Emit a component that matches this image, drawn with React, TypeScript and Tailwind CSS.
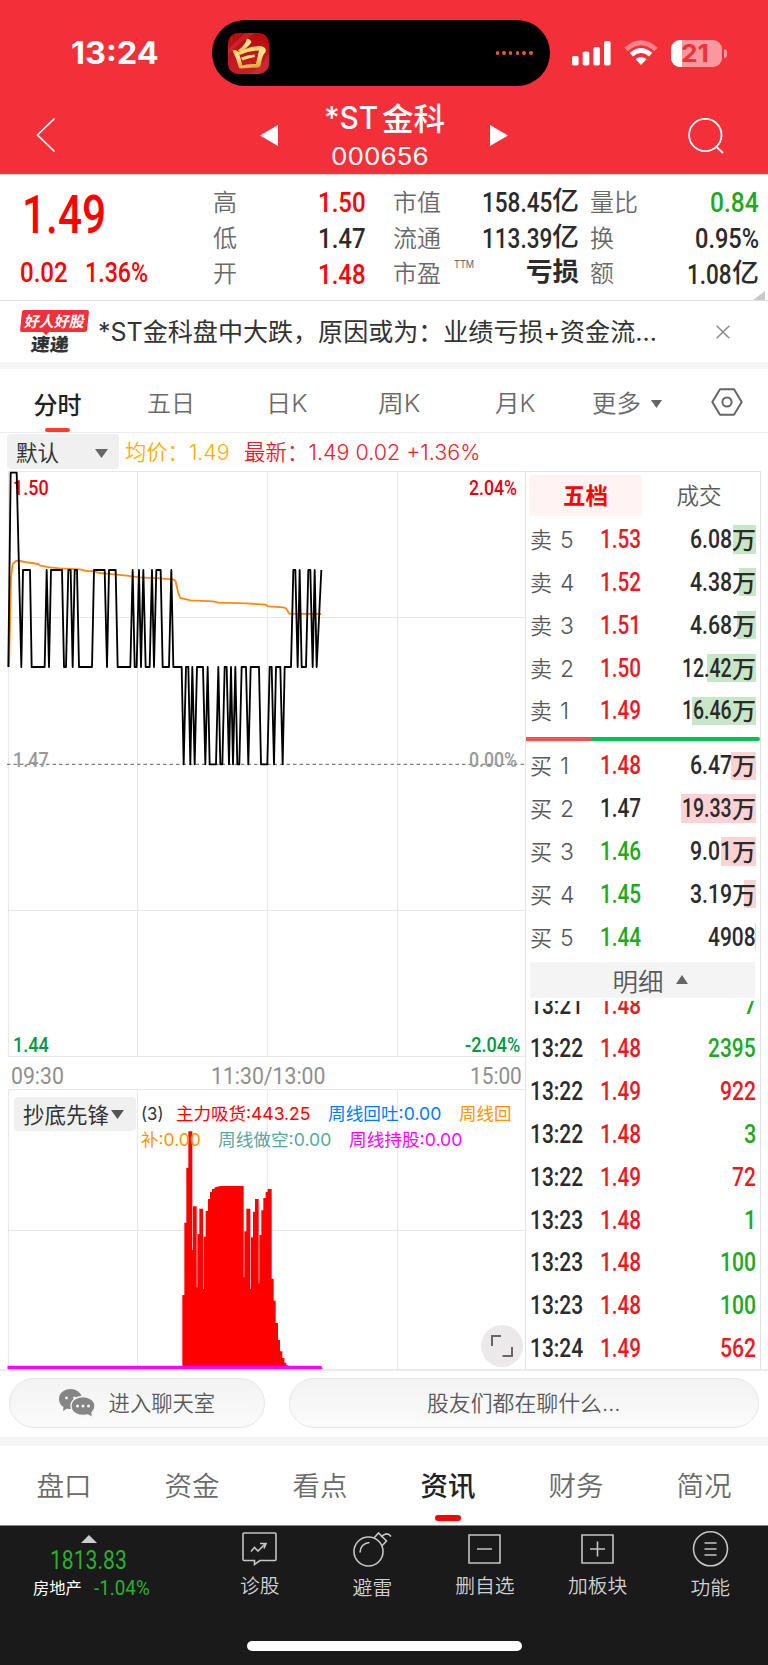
import React, { useLayoutEffect, useRef } from "react";

const din = "font-[Roboto,'Noto_Sans_CJK_SC',sans-serif]";

/* Condenses or widens a line of text so that it fills the width given by its class. */
function Fit({ className = "", children }: { className?: string; children: React.ReactNode }) {
  const outer = useRef<HTMLSpanElement>(null);
  const inner = useRef<HTMLSpanElement>(null);
  useLayoutEffect(() => {
    const o = outer.current;
    const i = inner.current;
    if (o && i) i.style.transform = `scaleX(${o.clientWidth / i.offsetWidth})`;
  }, []);
  return (
    <span ref={outer} className={`block shrink-0 whitespace-nowrap ${className}`}>
      <span ref={inner} className="inline-block origin-left align-top">
        {children}
      </span>
    </span>
  );
}

function StatusBar() {
  return (
    <div className="flex h-[66px] items-center text-white">
      <Fit className="ml-[71px] w-[88px] font-[Inter,sans-serif] text-[31px] leading-[66px] font-bold">13:24</Fit>
      <div className="ml-[52.500px] flex h-[66px] w-[338px] items-center justify-between rounded-full bg-black pr-[17px] pl-4">
        <div className="flex size-[41px] items-center justify-center overflow-hidden rounded-[10px] bg-linear-to-b from-[#b80909] to-[#c81e2c]">
          <svg viewBox="0 0 41 41" className="size-[41px]">
            <defs>
              <linearGradient id="gold" x1="0" y1="0" x2="0.4" y2="1">
                <stop offset="0" stopColor="#ffd24a" />
                <stop offset="0.6" stopColor="#fbe59a" />
                <stop offset="1" stopColor="#dcae35" />
              </linearGradient>
            </defs>
            <path d="M0 16Q10 6 18 0H28Q14 7 0 22ZM22 41Q34 34 41 20V34Q36 39 30 41Z" fill="#d33a42" opacity=".45" />
            <g fill="url(#gold)">
              <path d="M19 5.500Q22.500 6 23.500 9Q20 15 12 19L10 17.500Q17 12.500 19 5.500Z" />
              <path d="M4.500 17.500Q8 16 10.500 19Q13 26 14.500 33Q13.500 36 11 35Q9 26 4.500 17.500Z" />
              <path d="M9.500 19.500Q21 13.500 32 13Q39 14 37.500 19Q34.500 22 33.500 28Q33 34 30 34.500L12.500 35.500V33Q20 30.500 28 31Q29.500 24 31 17.500Q21 17.500 11.500 22Z" />
              <path d="M13 24.500Q19 22 26.500 21.500L27 24Q20 25 14.500 27.500Z" />
            </g>
          </svg>
        </div>
        <div className="flex gap-[3.200px]">
          {[0, 1, 2, 3, 4, 5].map((n) => (
            <i key={n} className="size-[3.500px] rounded-full bg-[#f4592f]" />
          ))}
        </div>
      </div>
      <svg viewBox="0 0 39 25" className="ml-[22.500px] h-[25px] w-[39px] fill-white">
        <rect x="0" y="15" width="6.600" height="9.500" rx="1.800" />
        <rect x="10.700" y="10.500" width="6.600" height="14" rx="1.800" />
        <rect x="21.300" y="6" width="6.600" height="18.500" rx="1.800" />
        <rect x="32" y="0" width="6.600" height="24.500" rx="1.800" />
      </svg>
      <svg viewBox="0 0 34 26" className="ml-[13px] h-[26px] w-[34px]" fill="none">
        <path d="M2 9.500Q17 -4 32 9.500" stroke="#f88388" strokeWidth="4.800" />
        <path d="M7.300 14.700Q17 6.500 26.700 14.700" stroke="#fff" strokeWidth="4.800" />
        <path d="M11.500 19.200Q17 15 22.500 19.200L17 25Z" fill="#fff" />
      </svg>
      <div className="ml-[13px] flex h-[27px] w-[51px] items-center overflow-hidden rounded-[9px] bg-[#f9999d]">
        <div className="h-full w-[11px] bg-white" />
        <Fit className="-ml-px w-[28px] font-[Inter,sans-serif] text-[24.500px] leading-[27px] font-bold text-[#f33039]">21</Fit>
      </div>
      <div className="ml-[1.500px] h-[9px] w-[3px] rounded-r-full bg-[#f9999d]" />
    </div>
  );
}

function Header() {
  return (
    <header className="h-[174px] bg-[#f33039] pt-5 text-white">
      <StatusBar />
      <div className="flex h-[88px] pl-[36px]">
        <svg viewBox="0 0 20 36" className="mt-[31px] h-[36px] w-[20px]" fill="none" stroke="#fff" strokeWidth="1.700">
          <path d="M18.500 1.500L1.500 18L18.500 34.500" />
        </svg>
        <svg viewBox="0 0 18 21" className="mt-[39px] ml-[204px] h-[21px] w-[18px] fill-white">
          <path d="M0 10.500L18 0V21Z" />
        </svg>
        <div className="mx-[46px] flex w-[120px] flex-col items-center">
          <div className="flex h-[66px]">
            <Fit className="w-[54px] font-[Inter,sans-serif] text-[31px] leading-[64px] font-medium">*ST</Fit>
            <Fit className="ml-1 w-[63px] font-['Noto_Sans_CJK_SC',sans-serif] text-[31px] leading-[61px] font-medium">金科</Fit>
          </div>
          <Fit className="-mt-[9px] mr-[8px] w-[98px] font-[Inter,sans-serif] text-[24.500px] leading-[26px]">000656</Fit>
        </div>
        <svg viewBox="0 0 18 21" className="mt-[39px] h-[21px] w-[18px] fill-white">
          <path d="M18 10.500L0 0V21Z" />
        </svg>
        <svg viewBox="0 0 37 38" className="mt-[31px] ml-[180px] h-[38px] w-[37px]" fill="none" stroke="#fff" strokeWidth="1.800">
          <circle cx="17.300" cy="18" r="16.200" />
          <path d="M28.500 30L35 36" />
        </svg>
      </div>
    </header>
  );
}

function Quote() {
  const lab = "font-['Noto_Sans_CJK_SC',sans-serif] text-[24px] leading-[35.700px] font-[350] text-[#6a6a6a]";
  const val = `${din} text-[28px] leading-9 font-medium text-[#2b2b2b]`;
  return (
    <section className="flex h-[127px] border-t border-b border-t-[#fbd0d2] border-b-[#dedede] pl-5">
      <div className="w-[193px] text-[#f00]">
        <Fit className={`${din} ml-[2px] mt-[10px] w-[84px] text-[53px] leading-[60px] font-medium`}>1.49</Fit>
        <div className="mt-[10px] flex">
          <Fit className={`${din} w-[48px] text-[28px] leading-9 font-medium`}>0.02</Fit>
          <Fit className={`${din} ml-[17px] w-[63px] text-[28px] leading-9 font-medium`}>1.36%</Fit>
        </div>
      </div>
      <div className={`mt-[8px] w-[105px] ${lab}`}>
        <div>高</div>
        <div>低</div>
        <div>开</div>
      </div>
      <div className={`mt-[10px] w-[75px] ${val}`}>
        <Fit className="w-[48px] text-[#f00]">1.50</Fit>
        <Fit className="w-[48px]">1.47</Fit>
        <Fit className="w-[48px] text-[#f00]">1.48</Fit>
      </div>
      <div className={`mt-[8px] w-[61px] ${lab}`}>
        <div>市值</div>
        <div>流通</div>
        <div>市盈</div>
      </div>
      <Fit className="mt-[81px] w-[20px] font-[Inter,sans-serif] text-[11px] leading-4 text-[#666]">TTM</Fit>
      <div className={`mt-[10px] flex w-[105px] flex-col items-end ${val}`}>
        <div className="flex">
          <Fit className="w-[70px]">158.45</Fit>
          <Fit className="-mt-[2px] w-[27px] text-[26px]">亿</Fit>
        </div>
        <div className="flex">
          <Fit className="w-[70px]">113.39</Fit>
          <Fit className="-mt-[2px] w-[27px] text-[26px]">亿</Fit>
        </div>
        <Fit className="-mt-[3px] w-[53px] text-[26px] font-bold">亏损</Fit>
      </div>
      <div className={`mt-[8px] ml-[11px] w-[49px] ${lab}`}>
        <div>量比</div>
        <div>换</div>
        <div>额</div>
      </div>
      <div className={`mt-[10px] flex w-[120px] flex-col items-end ${val}`}>
        <Fit className="w-[49px] text-[#21a821]">0.84</Fit>
        <Fit className="w-[64px]">0.95%</Fit>
        <div className="flex">
          <Fit className="w-[45px]">1.08</Fit>
          <Fit className="-mt-[2px] w-[27px] text-[26px]">亿</Fit>
        </div>
      </div>
      <svg viewBox="0 0 12 9" className="-ml-[6px] h-[9px] w-[12px] self-end fill-[#c8c8c8]">
        <path d="M12 0V9H0Z" />
      </svg>
    </section>
  );
}

function News() {
  return (
    <section className="flex h-[61px] items-center bg-white">
      <div className="ml-[19px] flex w-[71px] flex-col items-start">
        <div className="ml-[2px] flex h-[22px] w-[67px] -skew-x-6 items-center justify-center rounded-[2px] bg-[#f33039]">
          <Fit className="w-[60px] -skew-x-6 font-['Noto_Sans_CJK_SC',sans-serif] text-[15px] leading-5 font-bold text-white">好人好股</Fit>
        </div>
        <i className="-mt-1 ml-[24px] size-[6px] rotate-45 bg-[#f33039]" />
        <Fit className="ml-[12px] w-[38px] -skew-x-6 font-['Noto_Sans_CJK_SC',sans-serif] text-[18px] leading-[19px] font-black text-[#333]">速递</Fit>
      </div>
      <Fit className="ml-[8px] w-[559px] font-[Inter,'Noto_Sans_CJK_SC',sans-serif] text-[25px] leading-[36px] text-[#333]">
        *ST金科盘中大跌，原因或为：业绩亏损+资金流…
      </Fit>
      <svg viewBox="0 0 14 14" className="ml-[59px] size-[14px]" stroke="#8a8a8a" strokeWidth="1.500">
        <path d="M.7.7L13.300 13.300M13.300.7L.7 13.300" />
      </svg>
    </section>
  );
}

function PeriodTabs() {
  const t = "font-[Inter,'Noto_Sans_CJK_SC',sans-serif] text-[24px] leading-[69px] font-[350] text-[#6a6a6a]";
  return (
    <nav className="flex h-[71px] items-stretch border-t-[7px] border-b border-t-[#f5f5f5] border-b-[#ececec]">
      <div className="ml-[33px] flex w-[49px] flex-col items-center">
        <span className="h-[59px] font-['Noto_Sans_CJK_SC',sans-serif] text-[24px] leading-[69px] font-medium whitespace-nowrap text-[#222]">分时</span>
        <i className="h-[5px] w-[25px] rounded-[2px] bg-[#ff3b30]" />
      </div>
      <Fit className={`ml-[65px] w-[48px] ${t}`}>五日</Fit>
      <Fit className={`ml-[71px] w-[42px] ${t}`}>日K</Fit>
      <Fit className={`ml-[70px] w-[43px] ${t}`}>周K</Fit>
      <Fit className={`ml-[74px] w-[41px] ${t}`}>月K</Fit>
      <Fit className={`ml-[56px] w-[49px] ${t}`}>更多</Fit>
      <svg viewBox="0 0 11 8" className="mt-[31px] ml-[9.500px] h-[8px] w-[11px] fill-[#666]">
        <path d="M0 0H11L5.500 8Z" />
      </svg>
      <svg viewBox="0 0 32 28" className="mt-[19px] ml-[49px] h-[28px] w-[32px]" fill="none" stroke="#666" strokeWidth="2">
        <path d="M9 1.200H23L30.700 14L23 26.800H9L1.300 14Z" strokeLinejoin="round" />
        <circle cx="16" cy="14" r="4.600" />
      </svg>
    </nav>
  );
}

function AverageRow() {
  const t = "font-[Inter,'Noto_Sans_CJK_SC',sans-serif] text-[21.500px] leading-[36px] font-[350]";
  return (
    <div className="flex h-[38px] pt-px">
      <div className="ml-[7px] flex h-[35px] w-[112px] items-center justify-between rounded-[4px] bg-[#f0f0f0] pr-[11px] pl-[9px]">
        <span className="font-['Noto_Sans_CJK_SC',sans-serif] text-[21.500px] leading-[34px] text-[#333]">默认</span>
        <svg viewBox="0 0 13 9" className="mt-1 h-[9px] w-[13px] fill-[#666]">
          <path d="M0 0H13L6.500 9Z" />
        </svg>
      </div>
      <Fit className={`ml-[6px] w-[105px] text-[#ffae00] ${t}`}>均价：1.49</Fit>
      <Fit className={`ml-[14px] w-[236px] text-[#e8222c] ${t}`}>最新：1.49 0.02 +1.36%</Fit>
    </div>
  );
}

const PRICE =
  "25,606 32,23 50,23 57,315 64,606 69,315 90,315 95,606 134,606 140,315 147,606 153,315 186,315 192,606 198,606 205,315 212,315 218,606 224,315 231,315 237,606 276,606 282,315 314,315 321,606 327,315 347,315 353,606 391,606 398,315 404,606 410,606 417,315 423,606 430,315 437,606 449,606 456,315 462,606 469,315 482,315 488,606 507,606 514,315 520,606 545,606 551,898 558,606 565,606 571,898 577,606 584,898 591,606 609,606 616,898 623,606 629,898 648,898 655,606 661,898 667,898 674,606 680,606 687,898 693,606 699,898 706,606 712,898 718,898 725,606 738,606 745,898 752,606 777,606 783,898 802,898 809,606 815,606 822,898 828,606 841,606 848,898 854,606 873,606 880,315 886,315 893,606 899,315 905,606 918,606 925,315 931,315 938,606 944,315 950,606 964,315";
const AVERAGE =
  "27,606 33,340 38,297 48,288 60,288 75,291 115,297 122,302 150,307 180,310 240,313 260,318 285,319 297,324 320,326 380,332 420,337 480,340 522,344 527,350 535,385 541,399 560,403 572,406 640,409 655,413 740,415 795,419 805,424 850,427 858,430 868,446 964,447";

function PriceChart() {
  const l = `absolute ${din} text-[21px] leading-[22px] font-medium`;
  return (
    <div className="relative h-[586px]">
      <svg viewBox="0 471 526 586" className="h-[586px] w-[526px]" fill="none">
        <path
          d="M8.500 471V1057M137.500 471V1057M267.500 471V1057M397.500 471V1057M8 471.500H526M8 617.500H526M8 910.500H526M8 1056.500H526"
          stroke="#e8e8e8"
          strokeWidth="1.200"
        />
        <path d="M7 764.400H526" stroke="#808080" strokeWidth="1.300" strokeDasharray="3.500 3" />
      </svg>
      <Fit className={`${l} top-[6px] left-[13px] w-[36px] text-[#e60012]`}>1.50</Fit>
      <Fit className={`${l} top-[6px] left-[469px] w-[48px] text-[#e60012]`}>2.04%</Fit>
      <Fit className={`${l} top-[278px] left-[13px] w-[36px] text-[#999]`}>1.47</Fit>
      <Fit className={`${l} top-[278px] left-[469px] w-[48px] text-[#999]`}>0.00%</Fit>
      <Fit className={`${l} top-[563px] left-[13px] w-[36px] text-[#009944]`}>1.44</Fit>
      <Fit className={`${l} top-[563px] left-[465px] w-[55px] text-[#009944]`}>-2.04%</Fit>
      <svg viewBox="0 471 526 586" className="absolute inset-0 h-[586px] w-[526px]" fill="none">
        <g transform="translate(0 465) scale(.33333)" strokeLinejoin="round">
          <polyline points={AVERAGE} stroke="#ff8a0c" strokeWidth="5.500" />
          <polyline points={PRICE} stroke="#000" strokeWidth="5.500" />
        </g>
      </svg>
    </div>
  );
}

const VOLUME =
  "M37 742V525H43V308H49V143H55V34H67V390H69V259H80V502H82V342H88V266H99V507H101V350H107V273H114V237H120V216H126V207H133V203L141 200L152 198H221V472H223V334H229V266H241V507H243V352H249V275H255V237H266V490H268V345H274V271H280V234H287V216H293V207H305V476H311V542H317V609H324V660H330V694H337V714H343V728H349V736H355V742Z";

function Indicator() {
  const t = "font-[Inter,'Noto_Sans_CJK_SC',sans-serif] text-[17.500px] leading-[26px]";
  return (
    <div className="relative h-[280px]">
      <svg viewBox="0 1089 526 280" className="absolute inset-0 h-[280px] w-[526px]" fill="none">
        <path d="M8.500 1089V1370M137.500 1089V1370M267.500 1089V1370M397.500 1089V1370M8 1089.500H526M8 1230.500H526" stroke="#e8e8e8" strokeWidth="1.200" />
        <g transform="translate(170 1120) scale(.33333)">
          <path d={VOLUME} fill="#f00" />
        </g>
        <path d="M7.500 1365.700H320Q322.500 1366 322.500 1369.300H7.500Z" fill="#f0f" />
      </svg>
      <div className="relative flex pt-2 pl-[14px]">
        <div className="flex h-[34px] w-[122px] items-center rounded-[4px] bg-[#f0f0f0] pl-[9px]">
          <Fit className="w-[86px] font-['Noto_Sans_CJK_SC',sans-serif] text-[21.500px] leading-[32px] text-[#333]">抄底先锋</Fit>
          <svg viewBox="0 0 13 9" className="ml-[2px] h-[9px] w-[13px] fill-[#555]">
            <path d="M0 0H13L6.500 9Z" />
          </svg>
        </div>
        <div className={`ml-[5px] pt-1 ${t}`}>
          <div className="flex h-[26px]">
            <Fit className="w-[23px] text-[#333]">(3)</Fit>
            <Fit className="ml-[12px] w-[134px] text-[#f00]">主力吸货:443.25</Fit>
            <Fit className="ml-[18px] w-[113px] text-[#007aff]">周线回吐:0.00</Fit>
            <Fit className="ml-[18px] w-[53px] text-[#ff9500]">周线回</Fit>
          </div>
          <div className="flex h-[25px]">
            <Fit className="w-[60px] text-[#ff9500]">补:0.00</Fit>
            <Fit className="ml-[17px] w-[113px] text-[#58a6a0]">周线做空:0.00</Fit>
            <Fit className="ml-[18px] w-[113px] text-[#f0f]">周线持股:0.00</Fit>
          </div>
        </div>
      </div>
      <div className="absolute top-[236px] left-[481px] flex size-[42px] items-center justify-center rounded-full bg-[#ebe9ea]">
        <svg viewBox="0 0 22 22" className="size-[22px]" fill="none" stroke="#666" strokeWidth="2">
          <path d="M1 11V1H10M21 12V21H11.500" />
        </svg>
      </div>
    </div>
  );
}

const ASKS = [
  { n: "5", p: "1.53", q: "6.08", bar: "w-[23.500px]", w: "w-[42px]" },
  { n: "4", p: "1.52", q: "4.38", bar: "w-[17.500px]", w: "w-[42px]" },
  { n: "3", p: "1.51", q: "4.68", bar: "w-[18.700px]", w: "w-[42px]" },
  { n: "2", p: "1.50", q: "12.42", bar: "w-[49px]", w: "w-[50px]" },
  { n: "1", p: "1.49", q: "16.46", bar: "w-[64.500px]", w: "w-[50px]" },
];
const BIDS = [
  { n: "1", p: "1.48", q: "6.47", bar: "w-[25.500px]", w: "w-[42px]", c: "text-[#ea1a22]" },
  { n: "2", p: "1.47", q: "19.33", bar: "w-[75.500px]", w: "w-[50px]", c: "text-[#2b2b2b]" },
  { n: "3", p: "1.46", q: "9.01", bar: "w-[35.500px]", w: "w-[42px]", c: "text-[#21a821]" },
  { n: "4", p: "1.45", q: "3.19", bar: "w-[12.500px]", w: "w-[42px]", c: "text-[#21a821]" },
  { n: "5", p: "1.44", q: "4908", bar: "w-[1.500px]", w: "w-[48px]", c: "text-[#21a821]" },
];
const TRADES = [
  { t: "13:21", p: "1.48", q: "7", up: false, w: "w-[12px]" },
  { t: "13:22", p: "1.48", q: "2395", up: false, w: "w-[48px]" },
  { t: "13:22", p: "1.49", q: "922", up: true, w: "w-[36px]" },
  { t: "13:22", p: "1.48", q: "3", up: false, w: "w-[12px]" },
  { t: "13:22", p: "1.49", q: "72", up: true, w: "w-[24px]" },
  { t: "13:23", p: "1.48", q: "1", up: false, w: "w-[12px]" },
  { t: "13:23", p: "1.48", q: "100", up: false, w: "w-[36px]" },
  { t: "13:23", p: "1.48", q: "100", up: false, w: "w-[36px]" },
  { t: "13:24", p: "1.49", q: "562", up: true, w: "w-[36px]" },
];
const NUM = `${din} text-[25.300px] leading-[42.860px] font-medium`;

function Level(props: { side: string; n: string; p: string; q: string; w: string; bar: string; priceColor: string; barColor: string }) {
  return (
    <div className="relative flex h-[42.860px] items-center">
      <i className={`absolute top-[6.300px] right-[4px] h-[28.300px] ${props.bar} ${props.barColor}`} />
      <div className="relative flex w-full pl-[4px]">
        <span className="w-[30px] font-['Noto_Sans_CJK_SC',sans-serif] text-[22px] leading-[38.500px] font-[350] text-[#5a5a5a]">{props.side}</span>
        <span className="w-[40px] font-[Inter,sans-serif] text-[23px] leading-[42.860px] font-light text-[#555]">{props.n}</span>
        <Fit className={`w-[41px] ${NUM} ${props.priceColor}`}>{props.p}</Fit>
        <div className="mr-[4px] ml-auto flex text-[#2b2b2b]">
          <Fit className={`${NUM} ${props.w}`}>{props.q}</Fit>
          {props.q.includes(".") && (
            <Fit className="w-[24px] font-['Noto_Sans_CJK_SC',sans-serif] text-[24px] leading-[39px] font-medium">万</Fit>
          )}
        </div>
      </div>
    </div>
  );
}

function OrderBook() {
  return (
    <aside className="flex h-[898px] w-[236px] flex-col border-x border-t border-[#e2e2e2]">
      <div className="flex h-[47px] shrink-0 pt-[3px] pl-[3px] font-['Noto_Sans_CJK_SC',sans-serif] text-[22.500px] leading-[38px]">
        <div className="h-[41px] w-[113px] rounded-[3px] bg-[#fff3f3] text-center font-bold text-[#f00]">五档</div>
        <div className="w-[114px] text-center font-[350] text-[#5a5a5a]">成交</div>
      </div>
      {ASKS.map((r) => (
        <Level key={r.n} side="卖" {...r} priceColor="text-[#ea1a22]" barColor="bg-[#c8e6c8]" />
      ))}
      <div className="mt-[4px] flex h-1 shrink-0 overflow-hidden rounded-r-full">
        <i className="w-[65px] bg-[#f4504e]" />
        <i className="flex-1 bg-[#0cc04f]" />
      </div>
      <div className="h-[4px] shrink-0" />
      {BIDS.map(({ c, ...r }) => (
        <Level key={r.n} side="买" {...r} priceColor={c} barColor="bg-[#fbd3d5]" />
      ))}
      <div className="mt-[2px] ml-[4px] flex h-[36px] w-[225px] shrink-0 items-center justify-center gap-3 bg-[#f4f4f4] pl-[15px]">
        <span className="font-['Noto_Sans_CJK_SC',sans-serif] text-[25.500px] leading-[33px] font-[350] text-[#5a5a5a]">明细</span>
        <svg viewBox="0 0 12 9" className="h-[9px] w-[12px] fill-[#666]">
          <path d="M6 0L12 9H0Z" />
        </svg>
      </div>
      <div className="mt-[3px] -mb-[2px] flex min-h-0 flex-1 flex-col justify-end overflow-hidden">
        {TRADES.map((r, i) => (
          <div key={i} className="flex h-[42.860px] shrink-0 items-center pl-[4px]">
            <Fit className={`w-[53px] ${NUM} text-[#2b2b2b]`}>{r.t}</Fit>
            <Fit className={`ml-[17px] w-[41px] ${NUM} text-[#ea1a22]`}>{r.p}</Fit>
            <Fit className={`mr-[4px] ml-auto ${r.w} ${NUM} ${r.up ? "text-[#ea1a22]" : "text-[#21a821]"}`}>{r.q}</Fit>
          </div>
        ))}
      </div>
    </aside>
  );
}

function ChatRow() {
  const b = "flex h-[50px] items-center justify-center rounded-full border border-[#e6e6e6] bg-linear-to-b from-[#f3f3f3] to-[#fbfbfb] font-[Inter,'Noto_Sans_CJK_SC',sans-serif] text-[21.300px] leading-[44px] font-[350] text-[#5a5a5a]";
  return (
    <section className="flex h-[68px] gap-[24px] border-t-2 border-[#ebebeb] px-[9px] pt-[7px]">
      <div className={`${b} w-[256px]`}>
        <svg viewBox="0 0 36 29" className="mr-[14px] h-[29px] w-[36px]">
          <path d="M11.500 0C18 0 23 4.400 23 10S18 20 11.500 20Q9.500 20 8 19.500L4 22L4.500 18Q0 15 0 10C0 4.400 5 0 11.500 0Z" fill="#858585" />
          <circle cx="7.500" cy="9" r="1.400" fill="#f5f5f5" />
          <circle cx="15.500" cy="9" r="1.400" fill="#f5f5f5" />
          <path d="M24 7.500C30.500 7.500 36 11.500 36 17Q36 21 33 23.500L33.500 28.500L29 26Q27 26.500 24 26.500C17 26.500 12 22.500 12 17S17 7.500 24 7.500Z" fill="#858585" stroke="#f6f6f6" strokeWidth="1.400" />
          <circle cx="18.500" cy="17" r="1.500" fill="#f5f5f5" />
          <circle cx="24" cy="17" r="1.500" fill="#f5f5f5" />
          <circle cx="29.500" cy="17" r="1.500" fill="#f5f5f5" />
        </svg>
        进入聊天室
      </div>
      <div className={`${b} w-[471px]`}>
        <Fit className="w-[193px]">股友们都在聊什么…</Fit>
      </div>
    </section>
  );
}

function SectionTabs() {
  return (
    <nav className="flex h-[88px] border-t-[9px] border-[#f5f5f5] font-['Noto_Sans_CJK_SC',sans-serif] text-[27.500px] leading-[76px]">
      {["盘口", "资金", "看点", "资讯", "财务", "简况"].map((t) => (
        <div
          key={t}
          className={`flex w-32 flex-col items-center ${t === "资讯" ? "font-medium text-[#222]" : "font-[350] text-[#6a6a6a]"}`}
        >
          <span className="h-[69px]">{t}</span>
          {t === "资讯" && <i className="h-[6px] w-[26px] rounded-[3px] bg-[#f00]" />}
        </div>
      ))}
    </nav>
  );
}

const TOOLS = [
  {
    label: "诊股",
    low: false,
    icon: (
      <>
        <path d="M5 3H36Q37 3 37 4V29.500Q37 30.500 36 30.500H21L15.500 34.500V30.500H5Q4 30.500 4 29.500V4Q4 3 5 3Z" />
        <path d="M12 21.500L15.500 17.500L19 21L26 14M21 13.500H27L25 18.500" />
      </>
    ),
  },
  {
    label: "避雷",
    low: true,
    icon: (
      <>
        <circle cx="16.500" cy="21.500" r="14.500" />
        <path d="M8 22.500Q8.500 13.500 17.500 12.500M22 8L26.500 3L34.500 11L29.800 16M29 7Q35 1 39 6.500" />
      </>
    ),
  },
  { label: "删自选", low: false, icon: <path d="M5 5H36V33H5ZM13 19H28" /> },
  { label: "加板块", low: false, icon: <path d="M5 5H36V33H5ZM13 19H28M20.500 11.500V26.500" /> },
  {
    label: "功能",
    low: true,
    icon: (
      <>
        <circle cx="20.500" cy="18.800" r="17" />
        <path d="M14.500 13H26.500M14.500 19H26.500M14.500 25H26.500" />
      </>
    ),
  },
];

function BottomBar() {
  return (
    <footer className="h-[140px] border-t border-[#8a8a8a] bg-[#1a1a1a]">
      <div className="flex h-[115px]">
        <div className="flex w-[203.500px] flex-col pt-[9px] pl-[33px]">
          <svg viewBox="0 0 16 8" className="ml-[48px] h-[8px] w-[16px] fill-[#ccc]">
            <path d="M8 0L16 8H0Z" />
          </svg>
          <Fit className={`${din} mt-[2px] ml-[16.500px] w-[77px] text-[25.500px] leading-[31px] text-[#2bb02b]`}>1813.83</Fit>
          <div className="flex">
            <span className="w-[61px] font-['Noto_Sans_CJK_SC',sans-serif] text-[16.300px] leading-[23px] text-white">房地产</span>
            <Fit className={`${din} w-[56px] text-[20.500px] leading-[25px] text-[#2bb02b]`}>-1.04%</Fit>
          </div>
        </div>
        {TOOLS.map((t) => (
          <div key={t.label} className="flex w-[112.600px] flex-col items-center pt-1">
            <svg viewBox="0 0 41 38" className="h-[38px] w-[41px] shrink-0" fill="none" stroke="#c4c4c4" strokeWidth="1.600">
              {t.icon}
            </svg>
            <span
              className={`font-['Noto_Sans_CJK_SC',sans-serif] text-[19.800px] leading-[30px] font-[350] text-[#cfcfcf] ${t.low ? "mt-[4px]" : "mt-[2px]"}`}
            >
              {t.label}
            </span>
          </div>
        ))}
      </div>
      <div className="mx-auto h-[10px] w-[275px] rounded-full bg-white" />
    </footer>
  );
}

export default function App() {
  return (
    <div className="h-[1665px] w-[768px] overflow-hidden bg-white">
      <Header />
      <Quote />
      <News />
      <PeriodTabs />
      <AverageRow />
      <main className="flex h-[898px]">
        <div className="w-[525px]">
          <PriceChart />
          <div className={`flex h-[32px] pl-[10.500px] text-[#8e8e8e] ${din} text-[24px] leading-[38px]`}>
            <Fit className="w-[53px]">09:30</Fit>
            <Fit className="ml-[147px] w-[114px]">11:30/13:00</Fit>
            <Fit className="ml-[145px] w-[52px]">15:00</Fit>
          </div>
          <Indicator />
        </div>
        <OrderBook />
      </main>
      <ChatRow />
      <SectionTabs />
      <BottomBar />
    </div>
  );
}
